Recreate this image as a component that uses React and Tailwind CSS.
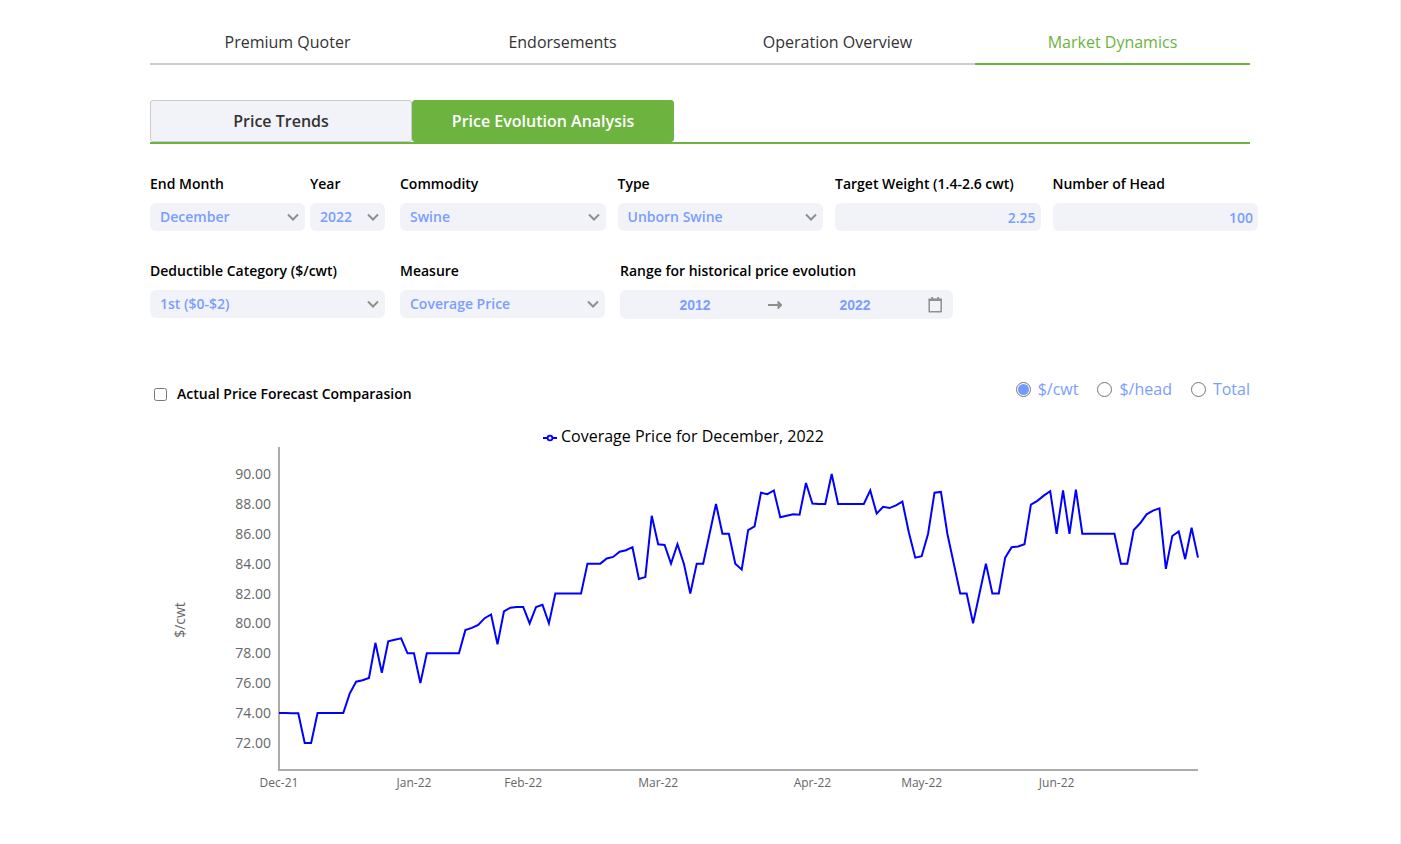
import { useState } from "react";

const mainTabs = ["Premium Quoter", "Endorsements", "Operation Overview", "Market Dynamics"];
const subTabs = ["Price Trends", "Price Evolution Analysis"];
const units = ["$/cwt", "$/head", "Total"];

// One coverage price per sales day
const prices = [
  74, 74, 73.98, 73.98, 72, 72, 74, 74, 74, 74, 74, 75.3, 76.1, 76.2, 76.35, 78.7,
  76.7, 78.8, 78.9, 79, 78, 78, 76, 78, 78, 78, 78, 78, 78, 79.55, 79.7, 79.9,
  80.35, 80.6, 78.6, 80.8, 81.05, 81.1, 81.1, 80, 81.1, 81.25, 80, 82, 82, 82, 82, 82,
  84, 84, 84, 84.35, 84.45, 84.8, 84.9, 85.1, 82.97, 83.1, 87.2, 85.3, 85.25, 84, 85.3, 84,
  82, 84, 84, 86, 88, 86, 86, 84, 83.6, 86.25, 86.5, 88.75, 88.65, 88.9, 87.1, 87.2,
  87.3, 87.28, 89.4, 88.03, 88, 88, 90, 88, 88, 88, 88, 88, 88.9, 87.35, 87.8, 87.72,
  87.9, 88.15, 86.1, 84.4, 84.5, 86, 88.75, 88.8, 86, 84, 82, 82, 80, 82, 84, 82,
  82, 84.4, 85.1, 85.15, 85.3, 87.95, 88.2, 88.55, 88.85, 86, 88.9, 86, 88.95, 86, 86, 86,
  86, 86, 86, 84, 84, 86.25, 86.7, 87.3, 87.55, 87.7, 83.65, 85.85, 86.15, 84.3, 86.4, 84.4,
];

const yTicks = [90, 88, 86, 84, 82, 80, 78, 76, 74, 72];
const xTicks = [
  { index: 0, label: "Dec-21" },
  { index: 21, label: "Jan-22" },
  { index: 38, label: "Feb-22" },
  { index: 59, label: "Mar-22" },
  { index: 83, label: "Apr-22" },
  { index: 100, label: "May-22" },
  { index: 121, label: "Jun-22" },
];

const plot = { left: 129, right: 1048, top: 27, bottom: 350 };
const toX = (i) => plot.left + (i * (plot.right - plot.left)) / (prices.length - 1);
const toY = (v) => 54 + (90 - v) * 14.94;

function Field({ label, id, className, children }) {
  return (
    <div className={className}>
      <label htmlFor={id} className="block text-sm leading-5 font-semibold whitespace-nowrap text-black mb-[9px]">
        {label}
      </label>
      {children}
    </div>
  );
}

function SelectField({ label, id, options, className }) {
  return (
    <Field label={label} id={id} className={className}>
      <div className="relative">
        <select
          id={id}
          className="block w-full h-7 appearance-none rounded-md bg-[#f2f3f8] pl-[10px] pr-7 text-sm font-semibold text-[#7a9eff] outline-none"
        >
          {options.map((o) => (
            <option key={o}>{o}</option>
          ))}
        </select>
        <svg className="absolute right-[6px] top-[10px] pointer-events-none" width="12" height="9" viewBox="0 0 12 9" fill="none">
          <path d="M1 1.5L6 6.5L11 1.5" stroke="#8f8f8f" strokeWidth="2" />
        </svg>
      </div>
    </Field>
  );
}

function NumberField({ label, id, value, className }) {
  return (
    <Field label={label} id={id} className={className}>
      <input
        id={id}
        type="text"
        inputMode="decimal"
        defaultValue={value}
        className="block w-full h-7 rounded-md bg-[#f2f3f8] px-[5px] pt-px text-right text-sm font-semibold text-[#7a9eff] outline-none"
      />
    </Field>
  );
}

function YearRange() {
  const inputClass =
    "min-w-0 flex-1 bg-transparent text-center text-sm font-bold font-['Liberation_Sans',sans-serif] text-[#7a9eff] outline-none";
  return (
    <div className="flex h-[29px] items-center rounded-md bg-[#f2f3f8] px-[10px]">
      <input id="range-start" type="text" defaultValue="2012" className={inputClass} />
      <span className="flex w-[30px] justify-center">
        <svg width="14" height="8" viewBox="0 0 14 8">
          <path d="M0 3H9.5V0H10.5L14 3.5V4.5L10.5 8H9.5V5H0Z" fill="#8f8f8f" />
        </svg>
      </span>
      <input type="text" aria-label="Range end" defaultValue="2022" className={inputClass} />
      <button type="button" aria-label="Open calendar" className="ml-2 cursor-pointer">
        <svg width="15" height="17" viewBox="0 0 15 17" fill="none">
          <path d="M1.2 3.5H13.2V15.8H1.2Z" stroke="#8f8f8f" strokeWidth="1.5" strokeLinejoin="round" />
          <path d="M0.6 2.6H13.8V5H0.6Z" fill="#8f8f8f" />
          <path d="M4.2 1V3.5M10.2 1V3.5" stroke="#8f8f8f" strokeWidth="1.8" />
        </svg>
      </button>
    </div>
  );
}

function PriceChart() {
  const points = prices.map((v, i) => `${toX(i)},${toY(v)}`).join(" ");
  return (
    <svg viewBox="0 0 1100 380" className="mt-4 block w-full">
      <g stroke="blue" strokeWidth="2" fill="white">
        <path d="M393 18H407" />
        <circle cx="400" cy="18" r="2.4" strokeWidth="1.8" />
      </g>
      <text x="411" y="22" fontSize="16" fill="#000">
        Coverage Price for December, 2022
      </text>

      <text x="35" y="200" fontSize="14" fill="#666" textAnchor="middle" transform="rotate(-90 35 200)">
        $/cwt
      </text>
      {yTicks.map((v) => (
        <text key={v} x="121" y={Math.round(toY(v)) + 5} fontSize="14" fill="#666" textAnchor="end">
          {v.toFixed(2)}
        </text>
      ))}
      {xTicks.map((t) => (
        <text key={t.label} x={toX(t.index)} y="367" fontSize="12" fill="#666" textAnchor="middle">
          {t.label}
        </text>
      ))}

      <path
        d={`M${plot.left} ${plot.top}V${plot.bottom}H${plot.right}`}
        stroke="#acacac"
        strokeWidth="2"
        fill="none"
      />
      <polyline points={points} stroke="blue" strokeWidth="2" fill="none" />
    </svg>
  );
}

export default function App() {
  const [tab, setTab] = useState("Market Dynamics");
  const [subTab, setSubTab] = useState("Price Evolution Analysis");
  const [unit, setUnit] = useState("$/cwt");

  return (
    <div className="min-h-screen border-r border-[#eeeeee] bg-white font-['Open_Sans',sans-serif]">
      <div className="mx-auto max-w-[1100px]">
        {/* Main navigation */}
        <nav className="flex pt-[30px]">
          {mainTabs.map((t) => (
            <button
              key={t}
              onClick={() => setTab(t)}
              className={`flex-1 border-b-2 pb-[9px] text-base leading-6 cursor-pointer ${
                tab === t ? "border-[#6db33f] text-[#6db33f]" : "border-[#cccccc] text-[#333333]"
              }`}
            >
              {t}
            </button>
          ))}
        </nav>

        {/* Sub tabs */}
        <div className="mt-[35px] flex border-b-2 border-[#6db33f]">
          {subTabs.map((t) => (
            <button
              key={t}
              onClick={() => setSubTab(t)}
              className={`h-[42px] w-[262px] rounded-[3px] border text-base font-semibold cursor-pointer ${
                subTab === t
                  ? "border-[#6db33f] bg-[#6db33f] text-white"
                  : "border-[#cccccc] bg-[#f2f3f8] text-[#333333]"
              }`}
            >
              {t}
            </button>
          ))}
        </div>

        {/* Filters */}
        <div className="mt-[30px] -mr-2 flex gap-[15px]">
          <div className="flex gap-[5px]">
            <SelectField label="End Month" id="end-month" options={["December"]} className="w-[155px]" />
            <SelectField label="Year" id="year" options={["2022"]} className="w-[75px]" />
          </div>
          <div className="flex flex-1 gap-3">
            <SelectField label="Commodity" id="commodity" options={["Swine"]} className="flex-1" />
            <SelectField label="Type" id="type" options={["Unborn Swine"]} className="flex-1" />
            <NumberField label="Target Weight (1.4-2.6 cwt)" id="target-weight" value="2.25" className="flex-1" />
            <NumberField label="Number of Head" id="head-count" value="100" className="flex-1" />
          </div>
        </div>
        <div className="mt-[30px] flex gap-[15px]">
          <SelectField label="Deductible Category ($/cwt)" id="deductible" options={["1st ($0-$2)"]} className="w-[235px]" />
          <SelectField label="Measure" id="measure" options={["Coverage Price"]} className="w-[205px]" />
          <Field label="Range for historical price evolution" id="range-start" className="w-[333px]">
            <YearRange />
          </Field>
        </div>

        {/* Chart options */}
        <div className="mt-[58px] flex items-start justify-between">
          <label className="flex items-center gap-[10px] pt-[7px] pl-1 text-sm leading-5 font-semibold text-black">
            <input type="checkbox" className="size-[13px]" />
            Actual Price Forecast Comparasion
          </label>
          <div className="flex gap-[19px]">
            {units.map((u) => (
              <label key={u} className="flex items-center gap-[7px] text-base leading-6 text-[#7a9eff]">
                <input
                  type="radio"
                  name="unit"
                  checked={unit === u}
                  onChange={() => setUnit(u)}
                  className="size-[15px] appearance-none rounded-full border border-[#767676] bg-white bg-clip-content p-[1px] checked:bg-[#709bff]"
                />
                {u}
              </label>
            ))}
          </div>
        </div>

        <PriceChart />
      </div>
    </div>
  );
}
